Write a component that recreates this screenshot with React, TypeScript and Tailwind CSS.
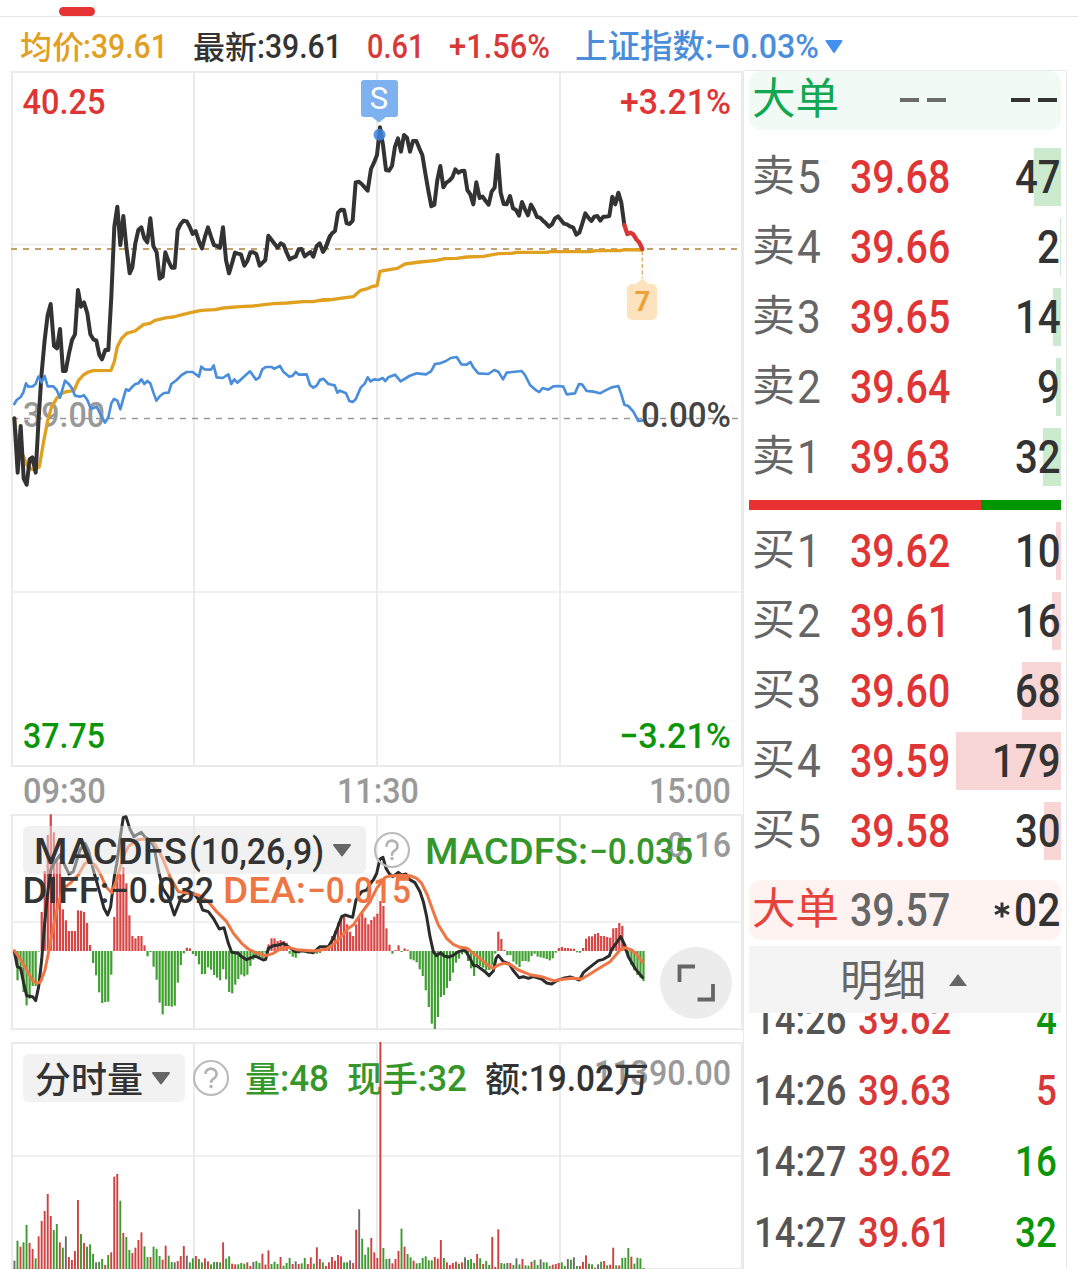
import React, { useLayoutEffect, useRef, useState } from 'react';

const RED = '#e03535';
const GREEN = '#0a9608';
const STEP = 3.024;

const PRICE_AM = '43,715 53,878 62,738 71,895 80,914 89,838 97,832 107,878 116,715 124,590 134,480 143,405 152,372 162,498 171,505 180,447 189,573 197,573 207,520 216,480 225,463 234,330 243,380 252,367 262,400 271,463 280,478 289,482 298,525 306,538 316,510 325,510 334,350 343,140 352,80 361,195 370,108 379,200 389,280 397,262 406,190 415,150 424,142 433,175 442,187 451,115 460,198 470,217 479,296 488,290 496,217 506,245 515,263 524,263 533,150 542,132 551,122 560,124 569,140 578,162 587,153 597,185 606,205 615,170 624,142 633,170 642,195 651,198 660,203 669,142 678,240 687,280 696,250 705,218 714,221 723,223 733,257 742,243 751,217 760,217 769,222 779,257 788,248 796,240 805,167 815,180 824,192 833,203 842,190 851,195 860,218 869,238 878,233 887,230 896,208 905,207 914,229 923,222 932,216 940,230 950,198 959,190 969,215 978,200 990,168';
const PRICE_PM = '9,545 18,530 27,505 36,490 45,483 54,428 63,419 72,420 80,460 89,462 98,452 107,337 116,335 125,342 134,352 143,362 153,297 162,278 171,255 180,172 189,225 198,300 207,302 216,288 225,230 234,205 243,245 252,195 261,203 270,245 279,213 289,213 298,235 307,255 316,310 325,362 334,409 343,404 352,330 361,288 370,352 379,338 388,332 397,322 406,298 415,308 424,303 433,302 442,360 451,373 460,403 469,337 479,384 488,380 497,393 506,404 515,365 524,353 533,255 542,368 551,402 560,403 570,378 579,415 588,420 597,437 606,396 615,418 624,436 633,404 642,420 651,441 660,443 669,452 678,460 687,470 696,463 705,445 714,439 723,450 732,461 741,463 750,469 760,473 769,494 778,488 787,460 796,430 805,443 814,453 823,440 832,438 841,452 850,440 859,440 868,438 877,380 886,403 895,368 904,398 913,465';
const PRICE_LAST = '913,465 922,492 931,488 940,493 949,508 958,518 967,537';
const AVG_AM = '43,715 53,800 71,830 80,855 95,868 107,868 118,860 130,790 143,722 155,680 170,655 185,640 200,635 222,632 235,602 250,585 265,576 280,572 333,571 343,545 352,500 365,475 380,460 405,453 430,434 450,430 465,421 500,413 520,411 550,403 585,395 605,391 645,389 670,384 720,380 760,378 820,371 860,369 910,365 940,365 970,359 990,359';
const AVG_PM = '0,692 35,689 60,685 100,680 122,661 140,657 155,650 171,647 180,604 195,601 232,595 255,582 300,576 350,571 375,566 410,565 440,561 490,559 535,551 575,550 590,547 680,547 690,545 810,545 830,542 900,542 915,539 967,540';
const INDEX_AM = '43,672 50,660 62,651 70,637 78,610 85,620 98,619 107,612 115,590 125,607 134,588 143,619 160,619 170,630 180,653 195,602 207,613 216,625 225,647 240,650 252,646 262,660 273,687 290,680 300,700 315,728 325,712 334,670 342,657 352,662 361,688 370,655 378,628 387,632 397,620 406,612 415,610 424,598 433,612 442,603 451,610 460,637 469,662 480,648 492,639 506,638 514,612 530,600 545,585 560,576 578,576 597,590 604,560 613,568 633,569 641,556 650,592 668,594 685,583 694,612 703,598 712,608 735,587 750,574 768,599 778,592 787,568 797,561 815,561 822,566 840,558 850,575 868,590 878,587 887,576 897,584 920,583 930,615 940,623 950,617 960,600';
const INDEX_PM = '0,930 10,926 25,942 44,946 52,968 60,962 78,970 88,993 98,996 107,988 122,953 135,940 143,922 152,934 162,928 175,930 188,924 196,933 205,922 225,914 242,934 268,918 290,910 318,913 333,904 345,882 360,880 378,873 392,864 410,861 424,883 440,884 451,876 460,892 475,910 505,912 523,900 535,905 549,928 560,908 605,903 615,915 630,945 650,962 658,966 668,954 685,959 700,949 715,948 730,950 740,973 765,970 777,942 787,944 800,963 820,965 840,970 855,962 875,952 895,948 904,973 913,1004 925,1008 940,1025 955,1053 967,1052';
const DIFF_AM = '43,455 52,500 62,505 71,550 80,587 98,590 107,602 116,560 125,480 134,370 143,280 152,210 162,190 180,165 189,185 207,222 220,215 240,150 255,130 265,150 280,210 300,280 312,325 323,345 332,320 343,230 352,180 361,110 370,52 378,50 390,88 402,110 414,102 424,97 436,112 450,120 462,140 475,210 488,265 505,290 523,345 545,290 560,278 580,280 597,300 608,330 625,335 640,355 658,387 672,383 685,430 695,457 715,460 722,468 740,479 765,468 790,480 797,478 805,445 820,437 835,435 850,430 865,440 885,455 910,452 940,458 960,440 985,440 1000,415 1012,385 1025,350 1035,345 1058,352 1068,300 1085,275 1100,270 1115,245';
const DIFF_PM = '5,245 10,240 20,220 30,177 39,172 48,205 57,220 68,230 85,217 95,225 108,222 118,238 135,248 150,275 160,305 170,350 180,410 190,455 200,467 212,458 222,468 235,471 250,466 265,455 285,450 300,475 311,497 320,497 335,508 345,515 357,527 370,513 378,475 385,466 400,485 418,492 430,512 447,533 460,530 475,535 490,530 515,537 530,549 545,552 560,542 580,535 600,531 615,535 628,540 640,518 655,505 685,482 700,478 718,467 725,448 740,428 752,410 762,430 775,470 795,505 818,533';
const DEA_AM = '43,452 60,475 80,510 98,542 112,550 122,545 135,510 145,460 160,380 175,310 190,265 210,250 235,225 255,190 268,185 285,195 300,220 318,260 335,278 350,240 370,170 385,140 410,120 435,117 460,125 475,150 490,180 510,230 535,275 560,278 595,285 625,305 650,335 680,365 700,400 725,430 745,447 765,457 797,467 820,460 845,445 865,442 890,449 945,453 980,447 1005,430 1025,408 1045,385 1060,375 1080,345 1100,318 1110,305';
const DEA_PM = '0,305 20,265 45,232 60,228 90,226 120,227 140,235 155,250 172,285 190,335 205,375 230,415 250,433 270,442 292,445 310,460 330,475 355,497 370,505 385,495 400,490 420,493 445,510 480,524 515,530 550,542 580,538 605,535 635,537 655,525 690,503 720,485 735,468 752,448 765,443 785,450 800,463 818,487';

const MACD = [
  0, -88, -60, -123, -163, -143, -105, -105, -2, 117, 240, 348, 410, 356, 275, 265, 125, 92, 60, 60,
  60, 122, 121, 117, 84, 18, -36, -73, -124, -156, -153, -152, -71, 102, 219, 230, 252, 203, 107, 45,
  38, 45, 45, 17, -16, -3, -47, -86, -155, -190, -165, -165, -167, -164, -95, -42, -7, 10, 8, -9,
  -15, -40, -69, -69, -49, -56, -72, -80, -88, -55, -85, -123, -127, -101, -84, -71, -76, -71, -45, -26,
  -15, -20, -22, -5, 20, 38, 38, 30, 33, 30, 25, -8, -17, -20, -8, -3, -5, -8, -3, -5,
  -8, -6, 4, 8, 20, 45, 60, 85, 98, 102, 80, 58, 45, 80, 100, 115, 100, 80, 93, 103,
  112, 150, 135, 68, 19, -8, 3, 17, -3, 8, 4, -25, -28, -34, -55, -75, -118, -168, -218, -234,
  -198, -138, -132, -111, -90, -65, -35, -23, -10, -5, -30, -52, -75, -45, -45, -50, -58, -57, -42, -8,
  58, 36, 3, -13, -12, -32, -40, -48, -30, -30, -32, -15, -8, -17, -19, -21, -24, -28, -22, -5,
  9, 12, 9, 9, 7, 7, -4, -5, 9, 37, 44, 44, 51, 54, 45, 45, 42, 40, 68, 69,
  84, 75, 20, -15, -42, -58, -72, -80, -90,
];

// r = up, g = down, k = flat
const VOLUME =
  'k25 g85 r67 g80 g132 r78 r60 g32 r98 r144 r174 r225 r159 g117 g135 r80 g64 k98 r36 r27 ' +
  'r54 r207 g105 r78 g67 g74 g45 k20 g21 g30 r12 g42 r50 r277 r285 g205 r108 g96 g57 r48 ' +
  'r64 r87 r110 g68 g36 r36 g67 g60 g39 r28 r70 g40 g21 k20 r24 r39 r69 k40 g20 g32 ' +
  'r39 g30 g20 r32 r23 g14 g21 k21 g20 r80 g31 g38 r16 r14 g14 g18 g16 r20 r9 k21 ' +
  'g24 g18 r46 r13 r56 g15 g22 g15 r36 g10 g18 g33 r15 k23 r15 g17 g33 r15 r35 g16 ' +
  'r65 r30 g20 r9 r20 r36 r25 r42 r38 g20 g20 k26 r18 r118 k179 g91 g43 g65 r93 r50 ' +
  'r33 r681 g63 g30 k31 r17 r30 r54 g121 r67 g45 g35 r25 g17 g18 g33 g38 g26 g26 r36 ' +
  'r31 r87 g33 r20 r12 r18 r22 g16 r20 k35 g27 g30 g18 r45 g32 r15 g24 g12 r96 r6 ' +
  'r119 g18 g16 k18 r18 g12 k32 g14 r30 g11 g10 r22 g27 g12 k29 g20 g20 g9 r13 r15 ' +
  'r18 g20 g9 k30 g28 k35 g9 r9 r21 r41 g16 g14 r4 k14 g22 r24 g11 r13 r64 g11 ' +
  'r11 g33 g34 g63 r37 g16 g34 g32 g3';

const VOLUME_COLORS: Record<string, string> = { r: '#cf4040', g: '#3c9a2e', k: '#6b6b6b' };

const asks: [string, string, number][] = [
  ['5', '39.68', 47],
  ['4', '39.66', 2],
  ['3', '39.65', 14],
  ['2', '39.64', 9],
  ['1', '39.63', 32],
];

const bids: [string, string, number][] = [
  ['1', '39.62', 10],
  ['2', '39.61', 16],
  ['3', '39.60', 68],
  ['4', '39.59', 179],
  ['5', '39.58', 30],
];

const trades: [string, string, string, boolean][] = [
  ['14:26', '39.62', '4', false],
  ['14:26', '39.63', '5', true],
  ['14:27', '39.62', '16', false],
  ['14:27', '39.61', '32', false],
];

// Condenses a piece of text to a given width
const Fit: React.FC<{ w: number; className?: string; children: React.ReactNode }> = ({ w, className, children }) => {
  const ref = useRef<HTMLSpanElement>(null);
  const [scale, setScale] = useState(1);

  useLayoutEffect(() => {
    if (ref.current) setScale(w / ref.current.offsetWidth);
  }, [w]);

  return (
    <span className="block shrink-0" style={{ width: w }}>
      <span
        ref={ref}
        className={`inline-block origin-left whitespace-nowrap align-top leading-none font-['Roboto',sans-serif] ${className ?? ''}`}
        style={{ transform: `scaleX(${scale})` }}
      >
        {children}
      </span>
    </span>
  );
};

const Han: React.FC<{ className?: string; children: React.ReactNode }> = ({ className, children }) => (
  <span className={`block shrink-0 whitespace-nowrap leading-none font-['Noto_Sans_CJK_SC',sans-serif] ${className ?? ''}`}>{children}</span>
);

interface LabelProps {
  x: number;
  y: number;
  w: number;
  fill: string;
  size?: number;
  han?: boolean;
  children: string;
}

const Label: React.FC<LabelProps> = ({ x, y, w, fill, size = 35.5, han, children }) => (
  <text
    x={x}
    y={y}
    fill={fill}
    fontSize={size}
    textLength={w}
    lengthAdjust="spacingAndGlyphs"
    className={han ? "font-medium font-['Noto_Sans_CJK_SC',sans-serif]" : "font-medium font-['Roboto',sans-serif]"}
  >
    {children}
  </text>
);

const Grid: React.FC<{ top: number; bottom: number; rows: number[] }> = ({ top, bottom, rows }) => (
  <g stroke="#ebebeb" strokeWidth={2}>
    {[12, 194, 377, 560, 742].map((x) => (
      <line key={x} x1={x} x2={x} y1={top - 1} y2={bottom + 1} />
    ))}
    <line x1={11} x2={743} y1={top} y2={top} />
    <line x1={11} x2={743} y1={bottom} y2={bottom} />
    {rows.map((y) => (
      <line key={y} x1={11} x2={743} y1={y} y2={y} strokeWidth={1.5} />
    ))}
  </g>
);

const Help: React.FC<{ x: number; y: number }> = ({ x, y }) => (
  <g>
    <circle cx={x} cy={y} r={17} fill="none" stroke="#bcbcbc" strokeWidth={2.2} />
    <path
      d={`M${x - 5.5} ${y - 4} a5.500 5.300 0 1 1 8.800 4.200 q-3.300 2 -3.300 4.500`}
      fill="none"
      stroke="#b4b4b4"
      strokeWidth={2.6}
    />
    <circle cx={x} cy={y + 8.5} r={1.8} fill="#b4b4b4" />
  </g>
);

const PriceChart: React.FC = () => (
  <svg className="block" width={744} height={696} viewBox="0 71 744 696" fill="none" strokeLinejoin="round" strokeLinecap="round">
    <Grid top={72} bottom={766} rows={[244.5, 592]} />
    <Label x={23} y={427} w={82} fill="#999999">39.00</Label>
    <line x1={12} x2={738} y1={418.5} y2={418.5} stroke="#999999" strokeWidth={1.6} strokeDasharray="6 6" strokeLinecap="butt" />
    <line x1={11} x2={738} y1={249} y2={249} stroke="#c3a06a" strokeWidth={1.8} strokeDasharray="6 6" strokeLinecap="butt" />
    <g transform="translate(0 180) scale(0.33333)">
      <polyline points={AVG_AM} stroke="#e0a020" strokeWidth={10} />
      <polyline points={PRICE_AM} stroke="#333333" strokeWidth={12} />
      <polyline points={INDEX_AM} stroke="#4a8edb" strokeWidth={8} />
    </g>
    <g transform="translate(320 70) scale(0.33333)">
      <polyline points={AVG_PM} stroke="#e0a020" strokeWidth={10} />
      <polyline points={PRICE_PM} stroke="#333333" strokeWidth={12} />
      <polyline points={PRICE_LAST} stroke="#d93636" strokeWidth={13} />
      <polyline points={INDEX_PM} stroke="#4a8edb" strokeWidth={8} />
    </g>
    <circle cx={379.5} cy={134.7} r={6} fill="#3d86e0" fillOpacity={0.85} />
    <path d="M364 80 h31 a3 3 0 0 1 3 3 v31 a3 3 0 0 1 -3 3 h-9 l-7 5.5 l-7 -5.5 h-8 a3 3 0 0 1 -3 -3 v-31 a3 3 0 0 1 3 -3 z" fill="#76adef" fillOpacity={0.95} />
    <text x={379} y={109} fontSize={31} textAnchor="middle" fill="#ffffff" className="font-['Roboto',sans-serif]">S</text>
    <line x1={642.3} x2={642.3} y1={251} y2={278} stroke="#e0b268" strokeWidth={1.5} strokeDasharray="4 2.5" strokeLinecap="butt" />
    <path d="M632 284 h4 l6.300 -5.500 l6.300 5.500 h3.400 a5 5 0 0 1 5 5 v26 a5 5 0 0 1 -5 5 h-20 a5 5 0 0 1 -5 -5 v-26 a5 5 0 0 1 5 -5 z" fill="#fde3bd" />
    <text x={642.5} y={310.5} fontSize={27} textAnchor="middle" fill="#eda136" className="font-bold font-['Roboto',sans-serif]">7</text>
    <Label x={22.5} y={114.3} w={83} fill={RED}>40.25</Label>
    <Label x={620} y={114.3} w={111} fill={RED}>+3.21%</Label>
    <Label x={641} y={427} w={90} fill="#444444">0.00%</Label>
    <Label x={23} y={748} w={82} fill={GREEN}>37.75</Label>
    <Label x={619} y={748} w={112} fill={GREEN}>−3.21%</Label>
  </svg>
);

const MacdChart: React.FC = () => (
  <svg className="block" width={744} height={217} viewBox="0 814 744 217" fill="none" strokeLinejoin="round" strokeLinecap="round">
    <Grid top={815} bottom={1029} rows={[922]} />
    {MACD.map((v, i) => (
      <rect
        key={i}
        x={13.4 + i * STEP}
        y={v > 0 ? 951 - v / 3 : 951}
        width={2.2}
        height={Math.abs(v) / 3}
        fill={v > 0 ? '#d84545' : '#3f9f30'}
      />
    ))}
    <g strokeWidth={9}>
      <g transform="translate(0 800) scale(0.33333)">
        <polyline points={DIFF_AM} stroke="#2c2c2c" />
        <polyline points={DEA_AM} stroke="#ee7644" />
      </g>
      <g transform="translate(370 800) scale(0.33333)">
        <polyline points={DIFF_PM} stroke="#2c2c2c" />
        <polyline points={DEA_PM} stroke="#ee7644" />
      </g>
    </g>
    <rect x={23} y={826} width={343} height={48} rx={6} fill="#e3e3e3" fillOpacity={0.5} />
    <Label x={34} y={864} w={153} size={36} fill="#333333">MACDFS</Label>
    <Label x={189} y={864} w={135} size={36} fill="#333333">(10,26,9)</Label>
    <path d="M334 845 h16 l-8 10.500 z" fill="#666666" stroke="#666666" strokeWidth={2} />
    <Help x={392} y={850} />
    <Label x={667} y={857} w={64} fill="#999999">0.16</Label>
    <Label x={425} y={863.5} w={163} size={36} fill="#35962a">MACDFS:</Label>
    <Label x={589} y={863.5} w={104} size={36} fill="#35962a">−0.035</Label>
    <Label x={22.5} y={903} w={87} size={36} fill="#333333">DIFF:</Label>
    <Label x={110} y={903} w={104} size={36} fill="#333333">−0.032</Label>
    <Label x={223} y={903} w={83} size={36} fill="#ee7644">DEA:</Label>
    <Label x={307} y={903} w={104} size={36} fill="#ee7644">−0.015</Label>
    <circle cx={696} cy={983} r={36} fill="#ececec" />
    <path d="M695 966.500 h-15.500 v15.500 M697.500 999.500 h15.500 v-15.500" stroke="#666666" strokeWidth={3.8} strokeLinecap="butt" strokeLinejoin="miter" />
  </svg>
);

const VolumeChart: React.FC = () => (
  <svg className="block" width={744} height={227} viewBox="0 1042 744 227" fill="none" strokeLinejoin="round">
    <Grid top={1043} bottom={1269} rows={[1156]} />
    <rect x={23} y={1054} width={162} height={48} rx={6} fill="#f2f2f2" />
    <Label han x={35} y={1092.5} w={108} size={36} fill="#333333">分时量</Label>
    <path d="M153 1073 h16 l-8 10.500 z" fill="#666666" stroke="#666666" strokeWidth={2} />
    <Help x={211} y={1078} />
    <Label x={594} y={1085} w={137} fill="#999999">11390.00</Label>
    <Label han x={245} y={1091.5} w={35} size={35} fill="#35962a">量</Label>
    <Label x={280} y={1091.3} w={49} size={36} fill="#35962a">:48</Label>
    <Label han x={347} y={1091.5} w={71} size={35} fill="#35962a">现手</Label>
    <Label x={418} y={1091.3} w={49} size={36} fill="#35962a">:32</Label>
    <Label han x={485} y={1091.5} w={35} size={35} fill="#333333">额</Label>
    <Label x={520} y={1091.3} w={94} size={36} fill="#333333">:19.02</Label>
    <Label han x={614} y={1091.5} w={35} size={35} fill="#333333">万</Label>
    {VOLUME.split(' ').map((v, i) => {
      const h = Number(v.slice(1)) / 3;
      return <rect key={i} x={13.5 + i * STEP} y={1269 - h} width={1.9} height={h} fill={VOLUME_COLORS[v[0]]} />;
    })}
  </svg>
);

const DepthRow: React.FC<{ side: string; level: string; price: string; qty: number }> = ({ side, level, price, qty }) => (
  <div className="relative h-[58px] flex items-center pl-[3px] pr-px">
    <div
      className={`absolute right-0 top-0 h-full ${side === '卖' ? 'bg-[#cceacd]' : 'bg-[#f9d6d6]'}`}
      style={{ width: Math.floor((qty * 105) / 179) }}
    />
    <Han className="w-[45px] -mt-[10px] text-[43px] text-[#666666]">{side}</Han>
    <Fit w={24} className="text-[46px] text-[#666666]">{level}</Fit>
    <div className="relative ml-[29px] flex-1 flex justify-between">
      <Fit w={100} className="text-[46px] font-medium text-[#e03535]">{price}</Fit>
      <Fit w={String(qty).length * 22.7} className="text-[46px] font-medium text-[#333333]">{qty}</Fit>
    </div>
  </div>
);

const OrderBook: React.FC = () => (
  <div className="w-[324px] h-[1199px] -mt-px shrink-0 overflow-hidden border border-b-0 border-[#e9e9e9] pl-[5px] pr-[5px]">
    <div className="h-[59px] rounded-xl bg-[#f1faf5] flex items-center pl-[3px] pr-[4px]">
      <Han className="w-[148px] -mt-[9px] text-[43.500px] text-[#12a751]">大单</Han>
      <div className="flex gap-2 -mt-0.5">
        <i className="w-[19px] h-1 bg-[#6b6b6b]" />
        <i className="w-[19px] h-1 bg-[#6b6b6b]" />
      </div>
      <div className="flex gap-2 ml-auto -mt-0.5">
        <i className="w-[19px] h-1 bg-[#333333]" />
        <i className="w-[19px] h-1 bg-[#333333]" />
      </div>
    </div>

    <div className="mt-[18px] flex flex-col gap-3">
      {asks.map(([level, price, qty]) => (
        <DepthRow key={level} side="卖" level={level} price={price} qty={qty} />
      ))}
    </div>

    <div className="mt-[14px] mb-3 h-[10px] flex bg-[#009600]">
      <div className="w-[232px] bg-[#e83232]" />
    </div>

    <div className="flex flex-col gap-3">
      {bids.map(([level, price, qty]) => (
        <DepthRow key={level} side="买" level={level} price={price} qty={qty} />
      ))}
    </div>

    <div className="mt-5 h-[60px] rounded-xl bg-[#fff3f2] flex items-center pl-[3px] pr-px">
      <Han className="w-[98px] -mt-[9px] text-[43.500px] text-[#e5433b]">大单</Han>
      <Fit w={100} className="text-[46px] font-medium text-[#666666]">39.57</Fit>
      <div className="ml-auto flex items-center">
        <svg width="16" height="16" viewBox="0 0 16 16" stroke="#333333" strokeWidth="3" className="mr-1">
          <path d="M8 0.500 V15.500 M1 4.200 L15 11.800 M15 4.200 L1 11.800" />
        </svg>
        <Fit w={46} className="text-[46px] font-medium text-[#333333]">02</Fit>
      </div>
    </div>

    <div className="mt-1.5 h-[67px] bg-[#f4f4f4] flex items-center pl-[91px]">
      <Han className="-mt-[5px] text-[43px] text-[#666666]">明细</Han>
      <svg width="18" height="12" viewBox="0 0 18 12" className="ml-[23px]">
        <path d="M9 0 L18 12 H0 Z" fill="#666666" />
      </svg>
    </div>

    <div className="h-[256px] overflow-hidden">
      <div className="-mt-[29px] pl-[5px] pr-1">
        {trades.map(([time, price, qty, up], i) => (
          <div key={i} className="h-[71px] flex items-center">
            <Fit w={93} className="text-[42px] font-medium text-[#555555]">{time}</Fit>
            <div className="ml-[11px] flex-1 flex justify-between">
              <Fit w={93} className="text-[42px] font-medium text-[#d93838]">{price}</Fit>
              <Fit w={qty.length * 21} className={`text-[42px] font-medium ${up ? 'text-[#d93838]' : 'text-[#0a9608]'}`}>{qty}</Fit>
            </div>
          </div>
        ))}
      </div>
    </div>
  </div>
);

const App: React.FC = () => {
  return (
    <div className="w-[1078px] h-[1269px] bg-white overflow-hidden">
      <div className="h-[17px] border-b border-[#e5e5e5] flex items-end pl-[59px]">
        <div className="w-9 h-[9px] rounded-full bg-[#e63232]" />
      </div>

      <div className="h-[54px] flex items-center pl-5 pt-[5px]">
        <div className="w-[173px] flex items-center text-[#dfa023]">
          <Han className="w-[63px] -mt-1 text-[32px] font-medium">均价</Han>
          <Fit w={85} className="text-[33px] font-medium">:39.61</Fit>
        </div>
        <div className="w-[174px] flex items-center text-[#333333]">
          <Han className="w-[64px] -mt-1 text-[32px] font-medium">最新</Han>
          <Fit w={85} className="text-[33px] font-medium">:39.61</Fit>
        </div>
        <div className="w-[82px] text-[#d93838]">
          <Fit w={57} className="text-[33px] font-medium">0.61</Fit>
        </div>
        <div className="w-[126px] text-[#d93838]">
          <Fit w={101} className="text-[33px] font-medium">+1.56%</Fit>
        </div>
        <div className="flex items-center text-[#4a8edb]">
          <Han className="w-[130px] -mt-1 text-[32.500px] font-medium">上证指数</Han>
          <Fit w={114} className="text-[33px] font-medium">:−0.03%</Fit>
          <svg width="18" height="13" viewBox="0 0 18 13" className="ml-1.5">
            <path d="M1.500 1 H16.500 L9 12 Z" fill="#4490ee" stroke="#4490ee" strokeWidth="2" strokeLinejoin="round" />
          </svg>
        </div>
      </div>

      <div className="flex">
        <div className="w-[743px] shrink-0">
          <PriceChart />
          <div className="h-[47px] flex items-center justify-between pt-0.5 pl-[23px] pr-3 text-[#999999]">
            <Fit w={83} className="text-[35px] font-medium">09:30</Fit>
            <Fit w={82} className="text-[35px] font-medium">11:30</Fit>
            <Fit w={82} className="text-[35px] font-medium">15:00</Fit>
          </div>
          <MacdChart />
          <div className="h-[11px]" />
          <VolumeChart />
        </div>
        <OrderBook />
      </div>
    </div>
  );
};

export default App;
